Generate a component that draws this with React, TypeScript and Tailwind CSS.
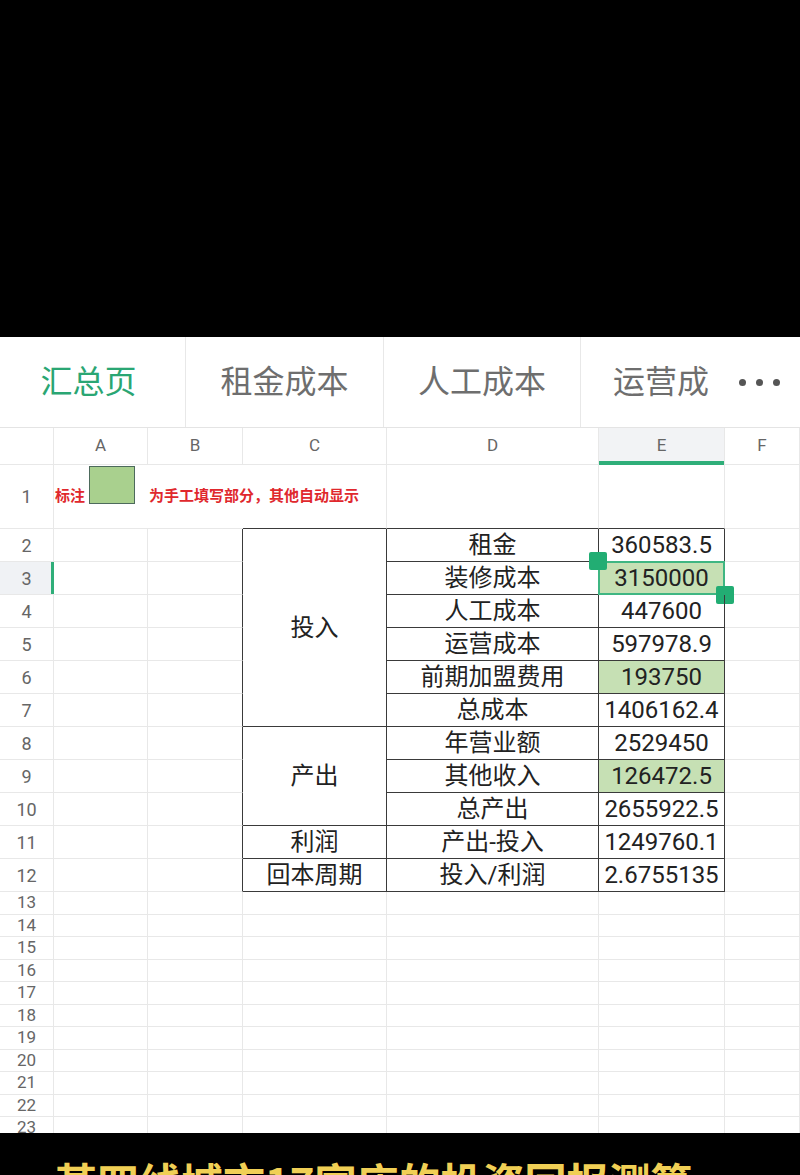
import React from "react";

const cjk = "font-['Roboto','Noto_Sans_CJK_SC',sans-serif]";

const rows = [
  { n: 2, d: "租金", e: "360583.5" },
  { n: 3, d: "装修成本", e: "3150000", fill: true, sel: true },
  { n: 4, d: "人工成本", e: "447600" },
  { n: 5, d: "运营成本", e: "597978.9" },
  { n: 6, d: "前期加盟费用", e: "193750", fill: true },
  { n: 7, d: "总成本", e: "1406162.4" },
  { n: 8, d: "年营业额", e: "2529450" },
  { n: 9, d: "其他收入", e: "126472.5", fill: true },
  { n: 10, d: "总产出", e: "2655922.5" },
  { n: 11, d: "产出-投入", e: "1249760.1" },
  { n: 12, d: "投入/利润", e: "2.6755135" },
];

const groups: Record<number, { label: string; span: string }> = {
  2: { label: "投入", span: "row-span-6" },
  8: { label: "产出", span: "row-span-3" },
  11: { label: "利润", span: "" },
  12: { label: "回本周期", span: "" },
};

const light = "border-r border-b border-[#e8e8e8]";
const dark = "border-r border-b border-[#3a3a3a]";

function Tabs() {
  return (
    <div className={`flex h-[91px] border-b border-[#e4e4e4] bg-white ${cjk}`}>
      <div className="flex w-[186px] items-center justify-center pr-[8px] text-[32px] text-[#2aa673] border-r border-[#e8e8e8]">
        汇总页
      </div>
      <div className="flex w-[198px] items-center justify-center border-r border-[#e8e8e8] text-[32px] text-[#6e6e6e]">
        租金成本
      </div>
      <div className="flex w-[197px] items-center justify-center border-r border-[#e8e8e8] text-[32px] text-[#6e6e6e]">
        人工成本
      </div>
      <div className="flex flex-1 items-center pl-[32px] text-[32px] text-[#6e6e6e]">
        <span>运营成</span>
        <div className="ml-auto mr-[20px] flex gap-[10px]">
          <span className="size-[7px] rounded-full bg-[#555]" />
          <span className="size-[7px] rounded-full bg-[#555]" />
          <span className="size-[7px] rounded-full bg-[#555]" />
        </div>
      </div>
    </div>
  );
}

function Sheet() {
  const letters = ["A", "B", "C", "D", "E", "F"];
  const tail = Array.from({ length: 11 }, (_, i) => i + 13);
  return (
    <div className="h-[705px] overflow-hidden bg-white">
      <div
        className={`grid grid-cols-[54px_94px_95px_144px_212px_126px_75px] grid-rows-[37px_64px_repeat(11,33px)_repeat(11,22.5px)] ${cjk}`}
      >
        {/* header row */}
        <div className={light} />
        {letters.map((l) =>
          l === "E" ? (
            <div
              key={l}
              className={`relative flex items-center justify-center bg-[#f2f3f5] text-[17px] text-[#666] ${light}`}
            >
              {l}
              <div className="absolute -bottom-px left-0 right-0 h-[4px] bg-[#2fae79]" />
            </div>
          ) : (
            <div key={l} className={`flex items-center justify-center text-[17px] text-[#666] ${light}`}>
              {l}
            </div>
          )
        )}

        {/* row 1 */}
        <div className={`flex items-center justify-center text-[18px] text-[#666] ${light}`}>1</div>
        <div className="relative border-b border-[#e8e8e8]">
          <div className="absolute left-px top-0 flex h-full items-center whitespace-nowrap text-[15px] font-bold text-[#e0282d]">
            <span>标注</span>
            <span className="ml-[4px] mb-[24px] h-[38px] w-[46px] border-[1.5px] border-[#4d6a5c] bg-[#a9d08e]" />
            <span className="ml-[14px]">为手工填写部分，其他自动显示</span>
          </div>
        </div>
        <div className="border-b border-[#e8e8e8]" />
        <div className="border-r border-[#e8e8e8] border-b border-b-[#3a3a3a]" />
        <div className="border-r border-[#e8e8e8] border-b border-b-[#3a3a3a]" />
        <div className="border-r border-[#e8e8e8] border-b border-b-[#3a3a3a]" />
        <div className={light} />

        {/* rows 2-12 */}
        {rows.map((r) => (
          <React.Fragment key={r.n}>
            {r.sel ? (
              <div className={`relative flex items-center justify-center bg-[#f0f2f5] text-[18px] text-[#666] ${light}`}>
                {r.n}
                <div className="absolute -right-px top-0 h-full w-[3px] bg-[#2fae79]" />
              </div>
            ) : (
              <div className={`flex items-center justify-center text-[18px] text-[#666] ${light}`}>{r.n}</div>
            )}
            <div className={light} />
            <div className="border-b border-[#e8e8e8] border-r border-r-[#3a3a3a]" />
            {groups[r.n] && (
              <div
                className={`flex items-center justify-center text-[24px] text-[#222] ${dark} ${groups[r.n].span}`}
              >
                {groups[r.n].label}
              </div>
            )}
            <div className={`flex items-center justify-center text-[24px] text-[#222] ${dark}`}>{r.d}</div>
            <div
              className={`relative flex items-center justify-center text-[24px] text-[#222] ${dark} ${
                r.fill ? "bg-[#c6e0b4]" : ""
              }`}
            >
              {r.e}
              {r.sel && (
                <>
                  <div className="absolute -left-px -top-px -right-px -bottom-px border-2 border-[#3fb682]" />
                  <div className="absolute -left-[10px] -top-[10px] size-[18px] rounded-[2px] bg-[#22ad73]" />
                  <div className="absolute -right-[10px] -bottom-[10px] size-[18px] rounded-[2px] bg-[#22ad73]" />
                </>
              )}
            </div>
            <div className={light} />
          </React.Fragment>
        ))}

        {/* rows 13-23 */}
        {tail.map((n) => (
          <React.Fragment key={n}>
            <div className={`flex items-center justify-center text-[17px] leading-none text-[#666] ${light}`}>{n}</div>
            <div className={light} />
            <div className={light} />
            <div className={light} />
            <div className={light} />
            <div className={light} />
            <div className={light} />
          </React.Fragment>
        ))}
      </div>
    </div>
  );
}

export default function App() {
  return (
    <div className="flex h-[1175px] w-[800px] flex-col overflow-hidden bg-black">
      <div className="h-[337px] shrink-0 bg-black" />
      <Tabs />
      <Sheet />
      <div className="h-[42px] shrink-0 overflow-hidden bg-black pl-[55px] pt-[27px]">
        <div className="whitespace-nowrap font-['Noto_Sans_CJK_SC',sans-serif] text-[42px] font-bold leading-none text-[#f0cf55]">
          某四线城市17家店的投资回报测算
        </div>
      </div>
    </div>
  );
}
